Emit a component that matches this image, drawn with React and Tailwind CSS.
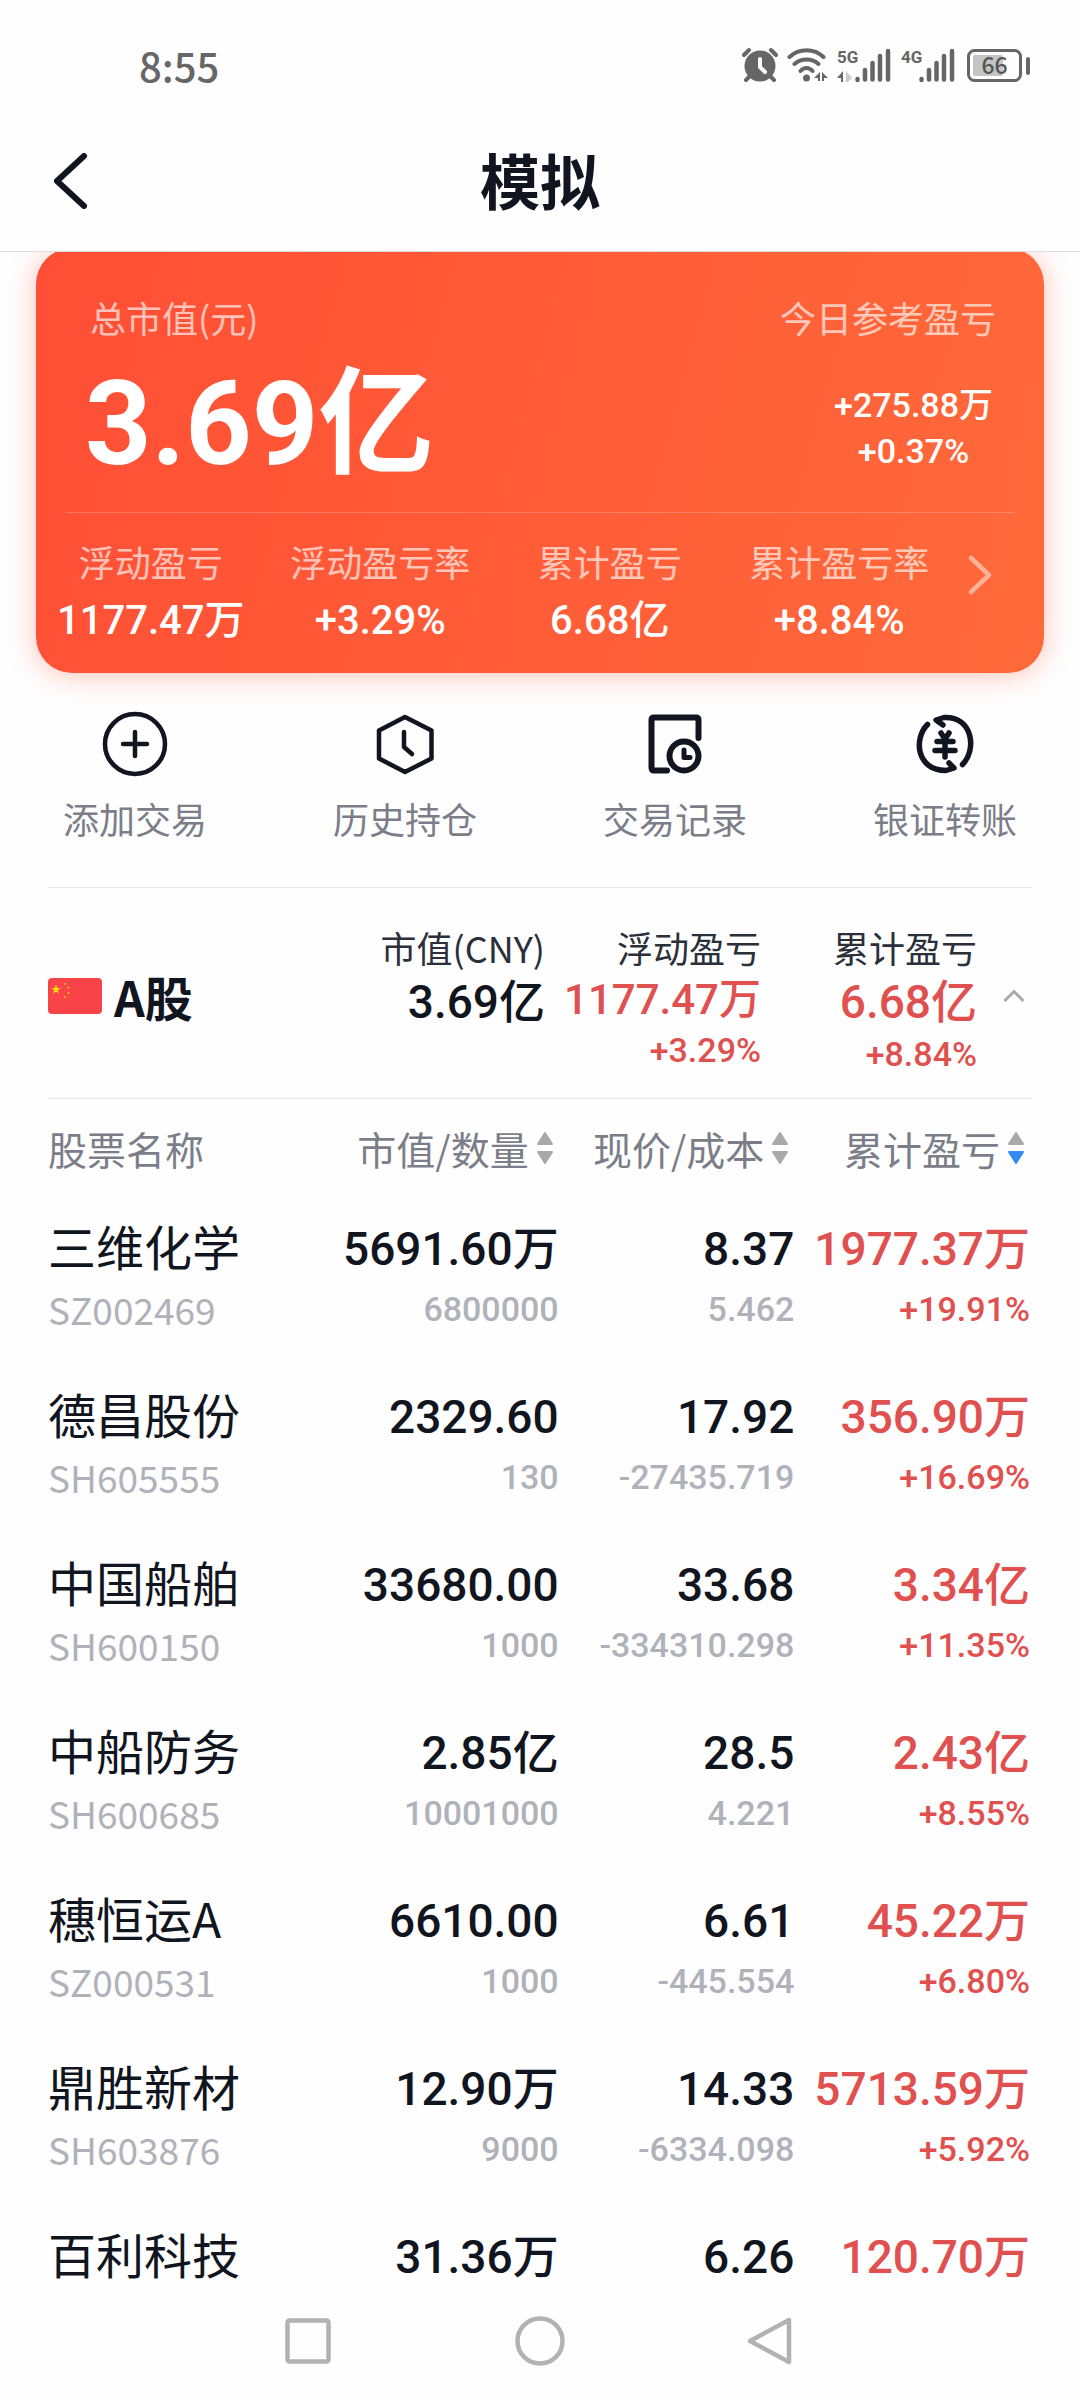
const summary = [
    { label: '浮动盈亏', value: '1177.47万' },
    { label: '浮动盈亏率', value: '+3.29%' },
    { label: '累计盈亏', value: '6.68亿' },
    { label: '累计盈亏率', value: '+8.84%' },
]

const holdings = [
    { name: '三维化学', code: 'SZ002469', value: '5691.60万', amount: '6800000', price: '8.37', cost: '5.462', profit: '1977.37万', rate: '+19.91%' },
    { name: '德昌股份', code: 'SH605555', value: '2329.60', amount: '130', price: '17.92', cost: '-27435.719', profit: '356.90万', rate: '+16.69%' },
    { name: '中国船舶', code: 'SH600150', value: '33680.00', amount: '1000', price: '33.68', cost: '-334310.298', profit: '3.34亿', rate: '+11.35%' },
    { name: '中船防务', code: 'SH600685', value: '2.85亿', amount: '10001000', price: '28.5', cost: '4.221', profit: '2.43亿', rate: '+8.55%' },
    { name: '穗恒运A', code: 'SZ000531', value: '6610.00', amount: '1000', price: '6.61', cost: '-445.554', profit: '45.22万', rate: '+6.80%' },
    { name: '鼎胜新材', code: 'SH603876', value: '12.90万', amount: '9000', price: '14.33', cost: '-6334.098', profit: '5713.59万', rate: '+5.92%' },
    { name: '百利科技', value: '31.36万', price: '6.26', profit: '120.70万' },
]

const AlarmIcon = () => (
    <svg width="36" height="36" viewBox="0 0 36 36" fill="none">
        <path d="M2 8L7 3M34 8L29 3" stroke="#666" strokeWidth="4" strokeLinecap="round" />
        <path d="M8 29L4 33M28 29L32 33" stroke="#666" strokeWidth="4" strokeLinecap="round" />
        <circle cx="18" cy="19" r="15.500" fill="#666" />
        <path d="M18 12V20L23 25" stroke="#fff" strokeWidth="4" strokeLinecap="round" strokeLinejoin="round" />
    </svg>
)

const WifiIcon = () => (
    <svg width="41" height="36" viewBox="0 0 41 36" fill="none">
        <path d="M2.500 10C12 1 27 1 36.500 10M7.500 17C14 11 25 11 31.500 17M13.500 24C17 20 22 20 25.500 24" stroke="#666" strokeWidth="4" strokeLinecap="round" />
        <circle cx="19.500" cy="31" r="3.500" fill="#666" />
        <path d="M27 31L33 25V34H31V31ZM35 25L41 31H37V34H35Z" fill="#666" />
    </svg>
)

const SignalIcon = ({ label, arrows = false }) => (
    <svg width="54" height="36" viewBox="0 0 54 36">
        <text x="0" y="16" fontFamily="'Roboto', sans-serif" fontSize="17" fontWeight="700" fill="#666">{label}</text>
        {arrows && (
            <>
                <path d="M0 31L6 24V35H4V31Z" fill="#666" />
                <path d="M9 24L15 31L11 35H9Z" fill="#ccc" />
            </>
        )}
        <path d="M20.500 33V32M28 32.500V23M35.500 32.500V16M43 32.500V9M51 32.500V4" stroke="#666" strokeWidth="4.500" strokeLinecap="round" />
    </svg>
)

const BatteryIcon = () => (
    <svg width="64" height="36" viewBox="0 0 64 36">
        <rect x="1.500" y="3.500" width="52" height="30" rx="6" fill="none" stroke="#666" strokeWidth="3" />
        <rect x="6" y="8" width="30" height="21" rx="2" fill="#c4c4c4" />
        <rect x="59" y="10" width="4" height="18" rx="2" fill="#666" />
        <text x="27.500" y="27" textAnchor="middle" fontFamily="'Noto Sans CJK SC', sans-serif" fontSize="23" fontWeight="500" fill="#555">66</text>
    </svg>
)

const AddIcon = () => (
    <svg width="68" height="68" viewBox="0 0 68 68" fill="none" stroke="#111520" strokeWidth="4.500" strokeLinecap="round">
        <circle cx="34" cy="34" r="30" />
        <path d="M34 22V46M22 34H46" />
    </svg>
)

const HistoryIcon = () => (
    <svg width="68" height="68" viewBox="0 0 68 68" fill="none" stroke="#111520" strokeWidth="4.500" strokeLinecap="round" strokeLinejoin="round">
        <path d="M34 7L60.500 20.500V48.500L34 62L8 48.500V20.500Z" />
        <path d="M33 22V37L41 44" />
    </svg>
)

const RecordIcon = () => (
    <svg width="68" height="68" viewBox="0 0 68 68" fill="none" stroke="#111520" strokeWidth="6" strokeLinecap="round" strokeLinejoin="round">
        <path d="M57.500 28V10Q57.500 7.500 55 7.500H13Q10.500 7.500 10.500 10V57.500Q10.500 60.500 13 60.500H26" />
        <circle cx="43" cy="46" r="14.500" />
        <path d="M43 40V47.500H49" strokeWidth="5" />
    </svg>
)

const TransferIcon = () => (
    <svg width="68" height="68" viewBox="0 0 68 68" fill="none" stroke="#111520" strokeWidth="5.500" strokeLinecap="round" strokeLinejoin="round">
        <path d="M16.500 14.500C2 29 6 61 35 60.500L43 58L38 53" />
        <path d="M51.500 54.500C66 40 62 6 33 7.500L25 10L32 15" />
        <path d="M30 23L34 29L38 23M26 31.500H42M24 40.500H44M34 30V47" />
    </svg>
)

const actions = [
    { label: '添加交易', Icon: AddIcon },
    { label: '历史持仓', Icon: HistoryIcon },
    { label: '交易记录', Icon: RecordIcon },
    { label: '银证转账', Icon: TransferIcon },
]

const star = 'M0-5L1.200-1.600L4.800-1.500L1.900 .6L2.900 4L0 2L-2.900 4L-1.900 .6L-4.800-1.500L-1.200-1.600Z'

const ChinaFlag = () => (
    <svg width="54" height="36" viewBox="0 0 54 36">
        <rect width="54" height="36" rx="4" fill="#f84349" />
        <g fill="#ffde00">
            <path d={star} transform="translate(8 11.500)" />
            <path d={star} transform="translate(17 6) scale(.3)" />
            <path d={star} transform="translate(20.500 9.500) scale(.3)" />
            <path d={star} transform="translate(20.500 15) scale(.3)" />
            <path d={star} transform="translate(17 19) scale(.3)" />
        </g>
    </svg>
)

const SortArrows = ({ active = false }) => (
    <svg width="16" height="34" viewBox="0 0 16 34" strokeWidth="2" strokeLinejoin="round">
        <path d="M8 2L15 13H1Z" fill="#a9a9a9" stroke="#a9a9a9" />
        <path d="M8 32L15 21H1Z" fill={active ? '#348bef' : '#a9a9a9'} stroke={active ? '#348bef' : '#a9a9a9'} />
    </svg>
)

const SortHeader = ({ label, active = false }) => (
    <th scope="col" className="w-[24%] p-0 font-normal">
        <button className="flex w-full items-center justify-end gap-2 pr-[6px] whitespace-nowrap">
            {label}
            <SortArrows active={active} />
        </button>
    </th>
)

const NumberCell = ({ main, sub, mainColor = 'text-[#111520]', subColor = 'text-[#b0b2ba]' }) => (
    <td className={`p-0 pt-[22px] text-right align-top font-medium font-['Roboto','Noto_Sans_CJK_SC',sans-serif] whitespace-nowrap ${mainColor}`}>
        <div className="text-[46px] leading-[60px]">{main}</div>
        {sub && <div className={`mt-1 text-[34px] leading-[52px] ${subColor}`}>{sub}</div>}
    </td>
)

const MarketColumn = ({ label, value, rate, valueClass }) => (
    <div className="w-[216px] text-right whitespace-nowrap">
        <div className="text-[36px] leading-[54px] text-[#2b2f3a]">{label}</div>
        <div className={`font-medium font-['Roboto','Noto_Sans_CJK_SC',sans-serif] ${valueClass}`}>{value}</div>
        {rate && <div className="text-[34px] font-medium leading-[48px] text-[#e0504f] font-['Roboto',sans-serif]">{rate}</div>}
    </div>
)

const App = () => {
    return (
        <div className="flex min-h-screen flex-col bg-[#fefefe] text-[#111520] font-['Noto_Sans_CJK_SC',sans-serif]">
            {/* Status bar */}
            <div className="flex h-[110px] items-center justify-between pt-5 pr-[49px] pl-[139px]">
                <span className="text-[40px] font-medium leading-[48px] text-[#666]">8:55</span>
                <div className="flex items-center">
                    <AlarmIcon />
                    <div className="pl-[9px]"><WifiIcon /></div>
                    <div className="pl-[9px]"><SignalIcon label="5G" arrows /></div>
                    <div className="pl-[10px]"><SignalIcon label="4G" /></div>
                    <div className="pl-[12px]"><BatteryIcon /></div>
                </div>
            </div>

            <header className="relative z-10 grid h-[142px] grid-cols-[120px_1fr_120px] items-center border-b border-[#dcdcdc] bg-[#fefefe]">
                <button aria-label="返回" className="pl-[53px]">
                    <svg width="36" height="56" viewBox="0 0 36 56" fill="none" stroke="#111520" strokeWidth="6" strokeLinecap="round" strokeLinejoin="round">
                        <path d="M31 3L4 28L31 53" />
                    </svg>
                </button>
                <h1 className="pb-1 text-center text-[60px] font-bold leading-[80px]">模拟</h1>
            </header>

            <main className="flex-1">
                {/* Total value card */}
                <section className="mx-9 -mt-1 rounded-[36px] bg-[linear-gradient(105deg,#ff4e35,#ff6a3a)] text-white shadow-[0_2px_28px_rgba(255,80,50,0.35)]">
                    <div className="flex justify-between pt-[46px] pr-[48px] pl-[54px] text-[36px] leading-[46px] text-white/65">
                        <span>总市值(元)</span>
                        <span>今日参考盈亏</span>
                    </div>
                    <div className="flex h-[172px] items-center justify-between pr-[51px] pl-[49px] font-['Roboto','Noto_Sans_CJK_SC',sans-serif]">
                        <div className="pb-1 text-[116px] font-bold leading-[130px]">3.69亿</div>
                        <div className="pt-1 text-center text-[34px] font-medium leading-[46px]">
                            <div>+275.88万</div>
                            <div>+0.37%</div>
                        </div>
                    </div>
                    <div className="mx-[30px] border-t border-white/20" />
                    <div className="flex h-[160px] pt-[22px]">
                        {summary.map(item => (
                            <div key={item.label} className="flex-1 text-center whitespace-nowrap">
                                <div className="text-[36px] leading-[52px] text-white/65">{item.label}</div>
                                <div className="mt-1 text-[40px] font-medium leading-[60px] font-['Roboto','Noto_Sans_CJK_SC',sans-serif]">{item.value}</div>
                            </div>
                        ))}
                        <button aria-label="查看详情" className="flex w-[90px] items-start pt-5 pl-[14px]">
                            <svg width="24" height="40" viewBox="0 0 24 40" fill="none" stroke="#ffb199" strokeWidth="4.500" strokeLinecap="round" strokeLinejoin="round">
                                <path d="M3 3L21 20L3 37" />
                            </svg>
                        </button>
                    </div>
                </section>

                {/* Quick actions */}
                <nav className="grid grid-cols-4 pt-[37px] pb-[43px]">
                    {actions.map(({ label, Icon }) => (
                        <button key={label} className="flex flex-col items-center text-[36px] leading-[52px] text-[#7b7e88]">
                            <Icon />
                            <span className="mt-[14px]">{label}</span>
                        </button>
                    ))}
                </nav>

                {/* A share market */}
                <section className="mx-12 flex h-[212px] border-y border-[#e6e6e6] pt-8">
                    <div className="flex h-[152px] flex-1 items-center gap-3">
                        <ChinaFlag />
                        <h2 className="text-[48px] font-bold leading-[60px]">A股</h2>
                    </div>
                    <MarketColumn label="市值(CNY)" value="3.69亿" valueClass="text-[46px] leading-[56px]" />
                    <MarketColumn label="浮动盈亏" value="1177.47万" rate="+3.29%" valueClass="text-[42px] leading-[52px] text-[#e0504f]" />
                    <MarketColumn label="累计盈亏" value="6.68亿" rate="+8.84%" valueClass="text-[46px] leading-[56px] text-[#e0504f]" />
                    <button aria-label="收起" className="flex h-[152px] w-[55px] items-center justify-end pr-[7px]">
                        <svg width="22" height="14" viewBox="0 0 22 14" fill="none" stroke="#a9a9a9" strokeWidth="3">
                            <path d="M1.500 12L11 2.500L20.500 12" />
                        </svg>
                    </button>
                </section>

                {/* Holdings */}
                <div className="pr-[50px] pl-12">
                    <table className="w-full table-fixed border-collapse">
                        <thead>
                            <tr className="h-[98px] text-[39px] leading-[56px] text-[#7b7e88]">
                                <th scope="col" className="p-0 text-left font-normal">股票名称</th>
                                <SortHeader label="市值/数量" />
                                <SortHeader label="现价/成本" />
                                <SortHeader label="累计盈亏" active />
                            </tr>
                        </thead>
                        <tbody>
                            {holdings.map(item => (
                                <tr key={item.name} className="h-[168px] last:h-auto">
                                    <td className="p-0 pt-[18px] align-top whitespace-nowrap">
                                        <div className="text-[48px] leading-[60px]">{item.name}</div>
                                        {item.code && <div className="mt-2 text-[37px] leading-[52px] text-[#b0b2ba]">{item.code}</div>}
                                    </td>
                                    <NumberCell main={item.value} sub={item.amount} />
                                    <NumberCell main={item.price} sub={item.cost} />
                                    <NumberCell main={item.profit} sub={item.rate} mainColor="text-[#e0504f]" subColor="text-[#e0504f]" />
                                </tr>
                            ))}
                        </tbody>
                    </table>
                </div>
            </main>

            {/* System navigation */}
            <footer className="flex h-[110px] items-center justify-center gap-[178px] pb-2">
                <button aria-label="最近任务">
                    <svg width="54" height="54" viewBox="0 0 54 54" fill="none" stroke="#b2b2b2" strokeWidth="4.500">
                        <rect x="6.500" y="6.500" width="41" height="41" rx="2" />
                    </svg>
                </button>
                <button aria-label="主屏幕">
                    <svg width="54" height="54" viewBox="0 0 54 54" fill="none" stroke="#b2b2b2" strokeWidth="4.500">
                        <circle cx="27" cy="27" r="22.500" />
                    </svg>
                </button>
                <button aria-label="后退">
                    <svg width="54" height="54" viewBox="0 0 54 54" fill="none" stroke="#b2b2b2" strokeWidth="4.500" strokeLinejoin="round">
                        <path d="M44 6V48L5 27Z" />
                    </svg>
                </button>
            </footer>
        </div>
    )
}

export default App
